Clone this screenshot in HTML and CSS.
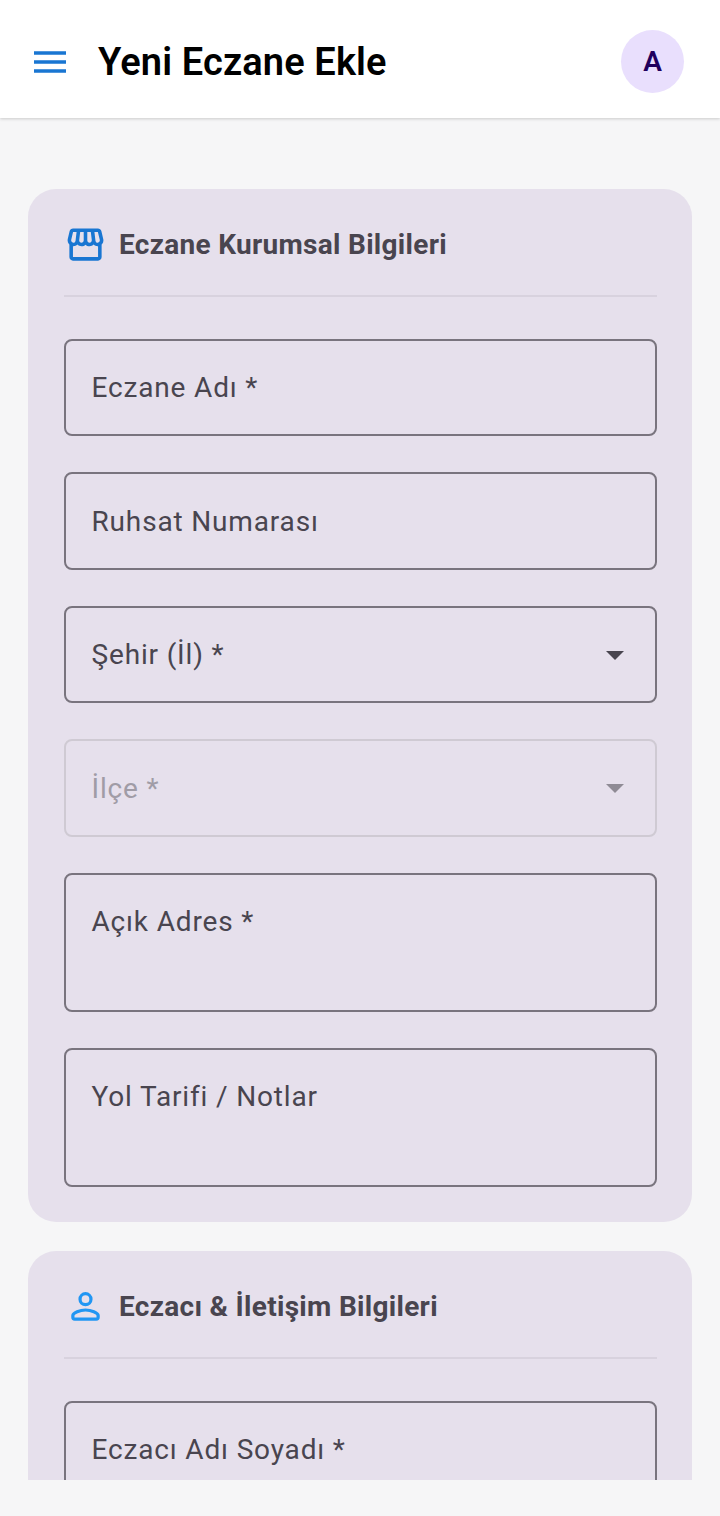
FILE: index.html
```html
<!DOCTYPE html>
<html lang="tr">
<head>
<meta charset="utf-8">
<title>Yeni Eczane Ekle</title>
<link rel="stylesheet" href="styles.css">
</head>
<body>
<div class="screen">
  <header class="appbar">
    <svg class="menu-icon" viewBox="0 0 32 22" aria-hidden="true"><path d="M0 2h32M0 11h32M0 20h32"/></svg>
    <h1 class="appbar-title">Yeni Eczane Ekle</h1>
    <div class="avatar">A</div>
  </header>
  <main class="content">
    <section class="card">
      <div class="card-head">
        <svg class="card-icon store" viewBox="0 0 24 24" aria-hidden="true"><path d="M21.9 8.89l-1.05-4.37c-.22-.9-1-1.52-1.91-1.52H5.05c-.9 0-1.69.63-1.9 1.52L2.1 8.89c-.24 1.02-.02 2.06.62 2.88.08.11.19.19.28.29V19c0 1.1.9 2 2 2h14c1.1 0 2-.9 2-2v-6.94c.09-.09.2-.18.28-.28.64-.82.87-1.87.62-2.89zm-2.99-3.9l1.05 4.37c.1.42.01.84-.25 1.17-.14.18-.44.47-.94.47-.61 0-1.14-.49-1.21-1.14L16.98 5l1.93-.01zM13 5h1.96l.54 4.52c.05.39-.07.78-.33 1.07-.22.26-.54.41-.95.41-.67 0-1.22-.59-1.22-1.31V5zM8.49 9.52L9.04 5H11v4.69c0 .72-.55 1.31-1.29 1.31-.34 0-.65-.15-.89-.41-.25-.29-.37-.68-.33-1.07zm-4.45-.16L5.05 5h1.97l-.58 4.86c-.08.65-.6 1.14-1.21 1.14-.49 0-.8-.29-.93-.47-.27-.32-.36-.75-.26-1.17zM5 19v-6.03c.08.01.15.03.23.03.87 0 1.66-.36 2.24-.95.6.6 1.4.95 2.31.95.87 0 1.65-.36 2.23-.93.59.57 1.39.93 2.29.93.84 0 1.64-.35 2.24-.95.58.59 1.37.95 2.24.95.08 0 .15-.02.23-.03V19H5z"/></svg>
        <h2 class="card-title">Eczane Kurumsal Bilgileri</h2>
      </div>
      <div class="fields">
        <div class="field"><span class="label">Eczane Adı *</span></div>
        <div class="field"><span class="label">Ruhsat Numarası</span></div>
        <div class="field select"><span class="label">Şehir (İl) *</span><i class="caret"></i></div>
        <div class="field select disabled"><span class="label">İlçe *</span><i class="caret"></i></div>
        <div class="field area"><span class="label">Açık Adres *</span></div>
        <div class="field area"><span class="label">Yol Tarifi / Notlar</span></div>
      </div>
    </section>
    <section class="card">
      <div class="card-head">
        <svg class="card-icon person" viewBox="0 0 24 24" aria-hidden="true"><circle cx="12" cy="7.900" r="3.050"/><path d="M6 19.050c-.55 0-1.050-.45-1.050-1V17c0-1.600 4-3.050 7.050-3.050S19.050 15.400 19.050 17v1.050c0 .55-.5 1-1.050 1Z"/></svg>
        <h2 class="card-title">Eczacı &amp; İletişim Bilgileri</h2>
      </div>
      <div class="fields">
        <div class="field"><span class="label">Eczacı Adı Soyadı *</span></div>
      </div>
    </section>
  </main>
</div>
</body>
</html>
```
FILE: styles.css
```css
* { box-sizing: border-box; }
html, body { margin: 0; padding: 0; }
body { background: #f6f6f7; font-family: Roboto, "Noto Sans", sans-serif; }
.screen { width: 720px; height: 1516px; display: flex; flex-direction: column; padding-bottom: 36px; overflow: hidden; }
.appbar { flex: none; height: 118px; background: #fff; display: flex; align-items: center; padding: 5px 36px 0 33.5px; box-shadow: 0 1px 3px rgba(0,0,0,.18); position: relative; z-index: 1; }
.menu-icon { width: 32px; height: 22px; fill: none; stroke: #1976d2; stroke-width: 3.4; flex: none; }
.appbar-title { margin: 0 0 0 32.5px; font-size: 38px; line-height: 44px; font-weight: 600; color: #000; letter-spacing: .13px; flex: 1; }
.avatar { width: 63px; height: 63px; border-radius: 50%; background: #e9dffd; color: #21005d; display: flex; align-items: center; justify-content: center; font-size: 28px; font-weight: 600; }
.content { flex: 1; min-height: 0; overflow: hidden; padding: 70.5px 28px 0; display: flex; flex-direction: column; gap: 28.5px; }
.card { flex: none; background: #e6e0ec; border-radius: 28px; padding: 36px 35.5px 35.5px; }
.card-head { display: flex; align-items: center; gap: 12.5px; height: 72px; padding-bottom: 30px; border-bottom: 2px solid #d8d2de; margin-bottom: 42px; }
.card-icon { flex: none; width: 43px; height: 43px; margin-left: 0; }
.store { fill: #1976d2; }
.person { fill: none; stroke: #2196f3; stroke-width: 1.8; stroke-linejoin: round; }
.card-title { margin: 0; font-size: 28px; line-height: 40px; font-weight: 700; color: #49454f; letter-spacing: .3px; }
.fields { display: flex; flex-direction: column; gap: 36px; }
.field { height: 97.5px; border: 2px solid #79747e; border-radius: 8px; padding: 2px 26px 0; display: flex; align-items: center; justify-content: space-between; }
.field.area { height: 139px; align-items: flex-start; padding-top: 27.5px; }
.label { font-size: 28px; line-height: 40px; color: #49454f; letter-spacing: .84px; }
.caret { width: 0; height: 0; border-left: 9px solid transparent; border-right: 9px solid transparent; border-top: 9px solid #49454f; margin-right: 5px; }
.field.disabled { border-color: #cfcad3; }
.disabled .label { color: #a09ca6; }
.disabled .caret { border-top-color: #8f8b95; }
```
